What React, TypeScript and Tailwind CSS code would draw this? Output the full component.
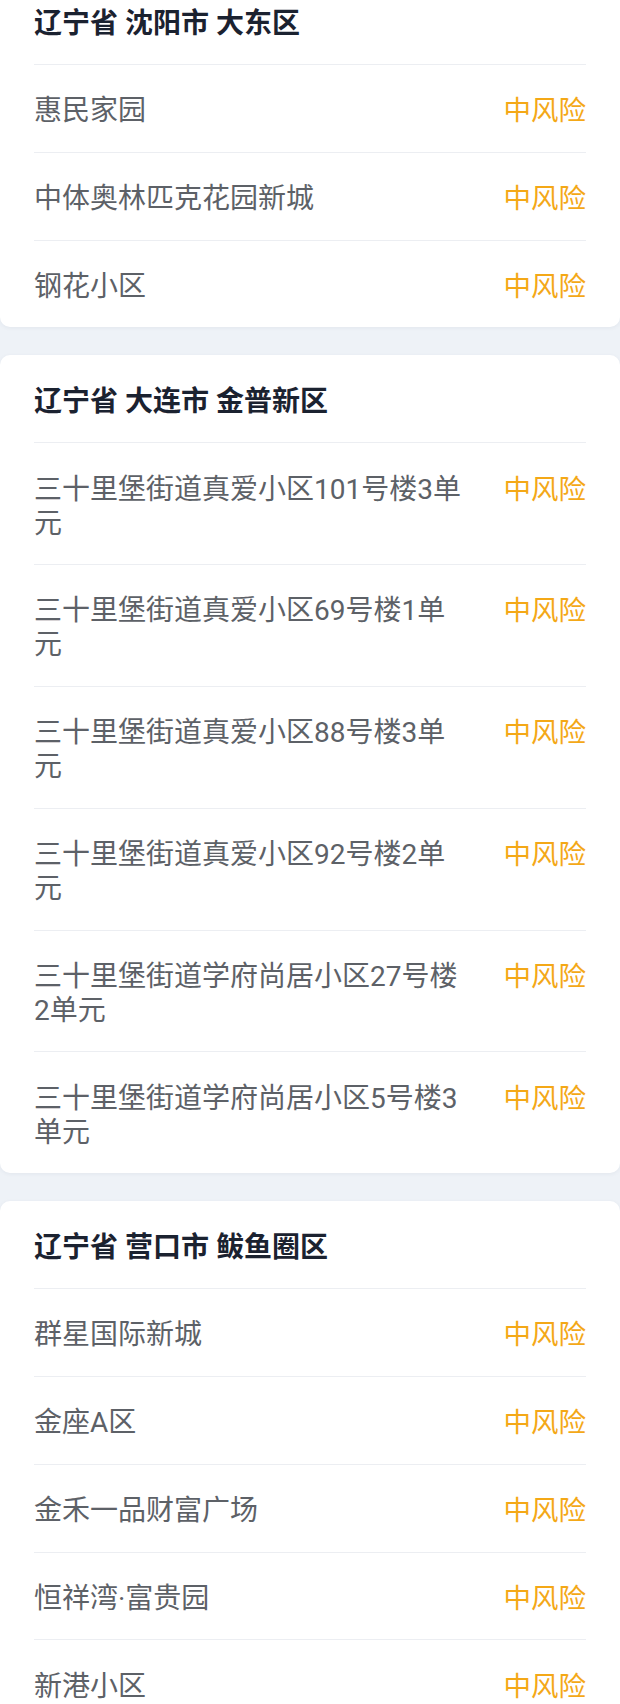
import React from "react";

type Group = {
  title: string;
  places: string[];
};

const groups: Group[] = [
  {
    title: "辽宁省 沈阳市 大东区",
    places: ["惠民家园", "中体奥林匹克花园新城", "钢花小区"],
  },
  {
    title: "辽宁省 大连市 金普新区",
    places: [
      "三十里堡街道真爱小区101号楼3单元",
      "三十里堡街道真爱小区69号楼1单元",
      "三十里堡街道真爱小区88号楼3单元",
      "三十里堡街道真爱小区92号楼2单元",
      "三十里堡街道学府尚居小区27号楼2单元",
      "三十里堡街道学府尚居小区5号楼3单元",
    ],
  },
  {
    title: "辽宁省 营口市 鲅鱼圈区",
    places: ["群星国际新城", "金座A区", "金禾一品财富广场", "恒祥湾·富贵园", "新港小区"],
  },
];

function RiskCard({ group }: { group: Group }) {
  return (
    <div className="bg-white rounded-[10px] shadow-[0_1px_4px_rgba(30,50,80,0.06)] px-[34px]">
      <div className="pt-[28.5px] pb-[23.5px] text-[28px] leading-[35px] font-bold text-[#1b2230]">
        {group.title}
      </div>
      {group.places.map((place, index) => (
        <div
          key={index}
          className="flex items-start justify-between border-t border-[#eceef2] pt-[29.3px] pb-[23.5px]"
        >
          <div className="w-[433px] text-[28px] leading-[34px] text-[#5d6167]">{place}</div>
          <div className="shrink-0 text-[27.5px] leading-[34px] text-[#f4a817]">中风险</div>
        </div>
      ))}
    </div>
  );
}

function App() {
  return (
    <div
      className="bg-[#eef2f7] min-h-screen overflow-hidden"
      style={{ fontFamily: 'Roboto, "Noto Sans CJK SC", sans-serif' }}
    >
      <div className="-mt-[23px] flex flex-col gap-[28px]">
        {groups.map((group, index) => (
          <RiskCard key={index} group={group} />
        ))}
      </div>
    </div>
  );
}

export default App;
